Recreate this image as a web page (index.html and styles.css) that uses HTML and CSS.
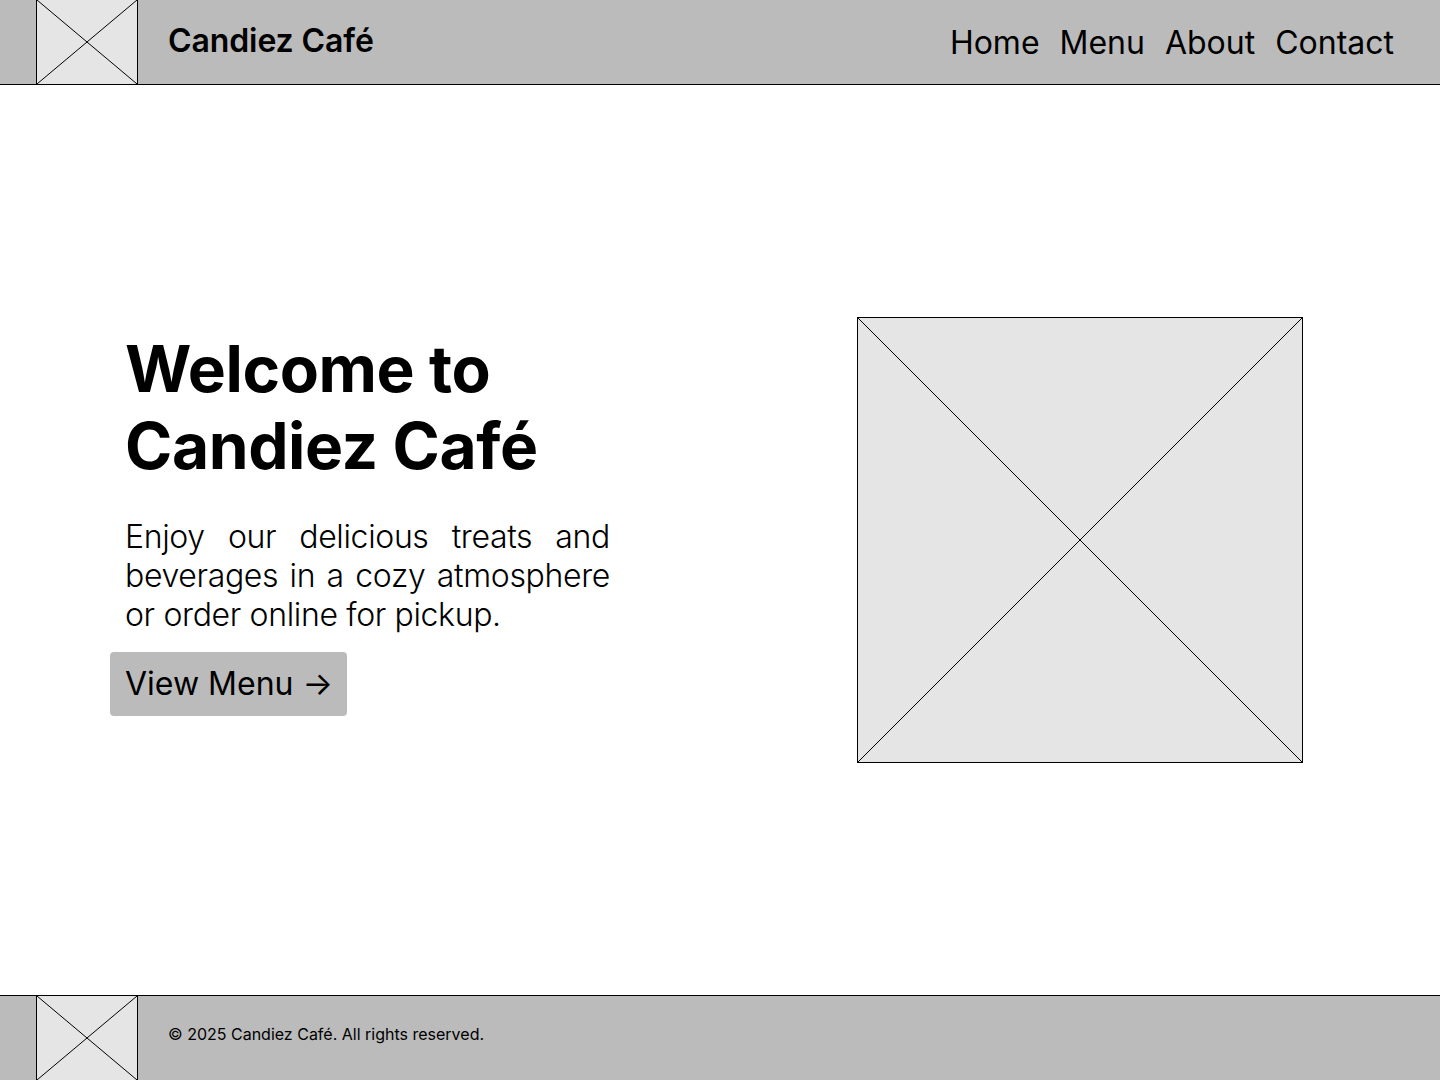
FILE: index.html
```html
<!DOCTYPE html>
<html lang="en">
<head>
<meta charset="utf-8">
<title>Candiez Café</title>
<link rel="stylesheet" href="styles.css">
</head>
<body>
<div class="page">
  <header class="site-header">
    <div class="logo-box">
      <svg class="xmark" viewBox="0 0 100 100" preserveAspectRatio="none"><line x1="0" y1="0" x2="100" y2="100" vector-effect="non-scaling-stroke"/><line x1="100" y1="0" x2="0" y2="100" vector-effect="non-scaling-stroke"/></svg>
    </div>
    <div class="brand">Candiez Café</div>
    <nav class="nav">
      <a href="#">Home</a>
      <a href="#">Menu</a>
      <a href="#">About</a>
      <a href="#">Contact</a>
    </nav>
  </header>
  <main class="hero">
    <div class="hero-text">
      <div class="hero-inner">
        <h1 class="title">Welcome to Candiez Café</h1>
        <p class="lead">Enjoy our delicious treats and beverages in a cozy atmosphere or order online for pickup.</p>
        <a class="btn" href="#">View Menu →</a>
      </div>
    </div>
    <div class="hero-media">
      <div class="image-box">
        <svg class="xmark" viewBox="0 0 100 100" preserveAspectRatio="none"><line x1="0" y1="0" x2="100" y2="100" vector-effect="non-scaling-stroke"/><line x1="100" y1="0" x2="0" y2="100" vector-effect="non-scaling-stroke"/></svg>
      </div>
    </div>
  </main>
  <footer class="site-footer">
    <div class="logo-box">
      <svg class="xmark" viewBox="0 0 100 100" preserveAspectRatio="none"><line x1="0" y1="0" x2="100" y2="100" vector-effect="non-scaling-stroke"/><line x1="100" y1="0" x2="0" y2="100" vector-effect="non-scaling-stroke"/></svg>
    </div>
    <p class="copy">© 2025 Candiez Café. All rights reserved.</p>
  </footer>
</div>
</body>
</html>
```
FILE: styles.css
```css
* { box-sizing: border-box; }
html, body { margin: 0; padding: 0; }
body {
  font-family: Inter, "Noto Sans", sans-serif;
  color: #000;
  background: #fff;
}
.page {
  display: flex;
  flex-direction: column;
  height: 1080px;
}
.site-header {
  height: 85px;
  background: #bbbbbb;
  border-bottom: 1px solid #000;
  display: flex;
  align-items: center;
  padding: 0 46px 0 36px;
}
.logo-box {
  width: 102px;
  height: 100%;
  background: #e5e5e5;
  border-left: 1px solid #000;
  border-right: 1px solid #000;
  flex: none;
  display: block;
}
.xmark {
  display: block;
  width: 100%;
  height: 100%;
}
.xmark line {
  stroke: #000;
  stroke-width: 1;
}
.brand {
  margin-left: 30px;
  font-size: 32px;
  font-weight: 600;
  letter-spacing: -0.1px;
  padding-bottom: 4px;
}
.nav {
  margin-left: auto;
  display: flex;
  gap: 20px;
}
.nav a {
  color: #000;
  text-decoration: none;
  font-size: 32px;
  font-weight: 400;
}
.hero {
  flex: 1;
  display: grid;
  grid-template-columns: 720px 720px;
  align-items: center;
}
.hero-text {
  display: flex;
  justify-content: center;
}
.hero-inner {
  width: 500px;
  padding-bottom: 33px;
}
.title {
  margin: 0;
  padding-left: 15px;
  font-size: 64px;
  line-height: 1.2;
  font-weight: 700;
  letter-spacing: -0.4px;
}
.lead {
  margin: 32px 0 18px;
  padding-left: 15px;
  font-size: 32px;
  line-height: 39px;
  font-weight: 300;
  letter-spacing: -0.35px;
  text-align: justify;
}
.btn {
  display: inline-block;
  background: #bbbbbb;
  color: #000;
  text-decoration: none;
  font-size: 32px;
  line-height: 48px;
  padding: 8px 14px 8px 15px;
  border-radius: 4px;
}
.hero-media {
  display: flex;
  justify-content: center;
}
.image-box {
  width: 446px;
  height: 446px;
  background: #e5e5e5;
  border: 1px solid #000;
}
.site-footer {
  height: 85px;
  background: #bbbbbb;
  border-top: 1px solid #000;
  display: flex;
  align-items: center;
  padding-left: 36px;
}
.copy {
  margin: 0 0 8px 30px;
  font-size: 16px;
}
```
